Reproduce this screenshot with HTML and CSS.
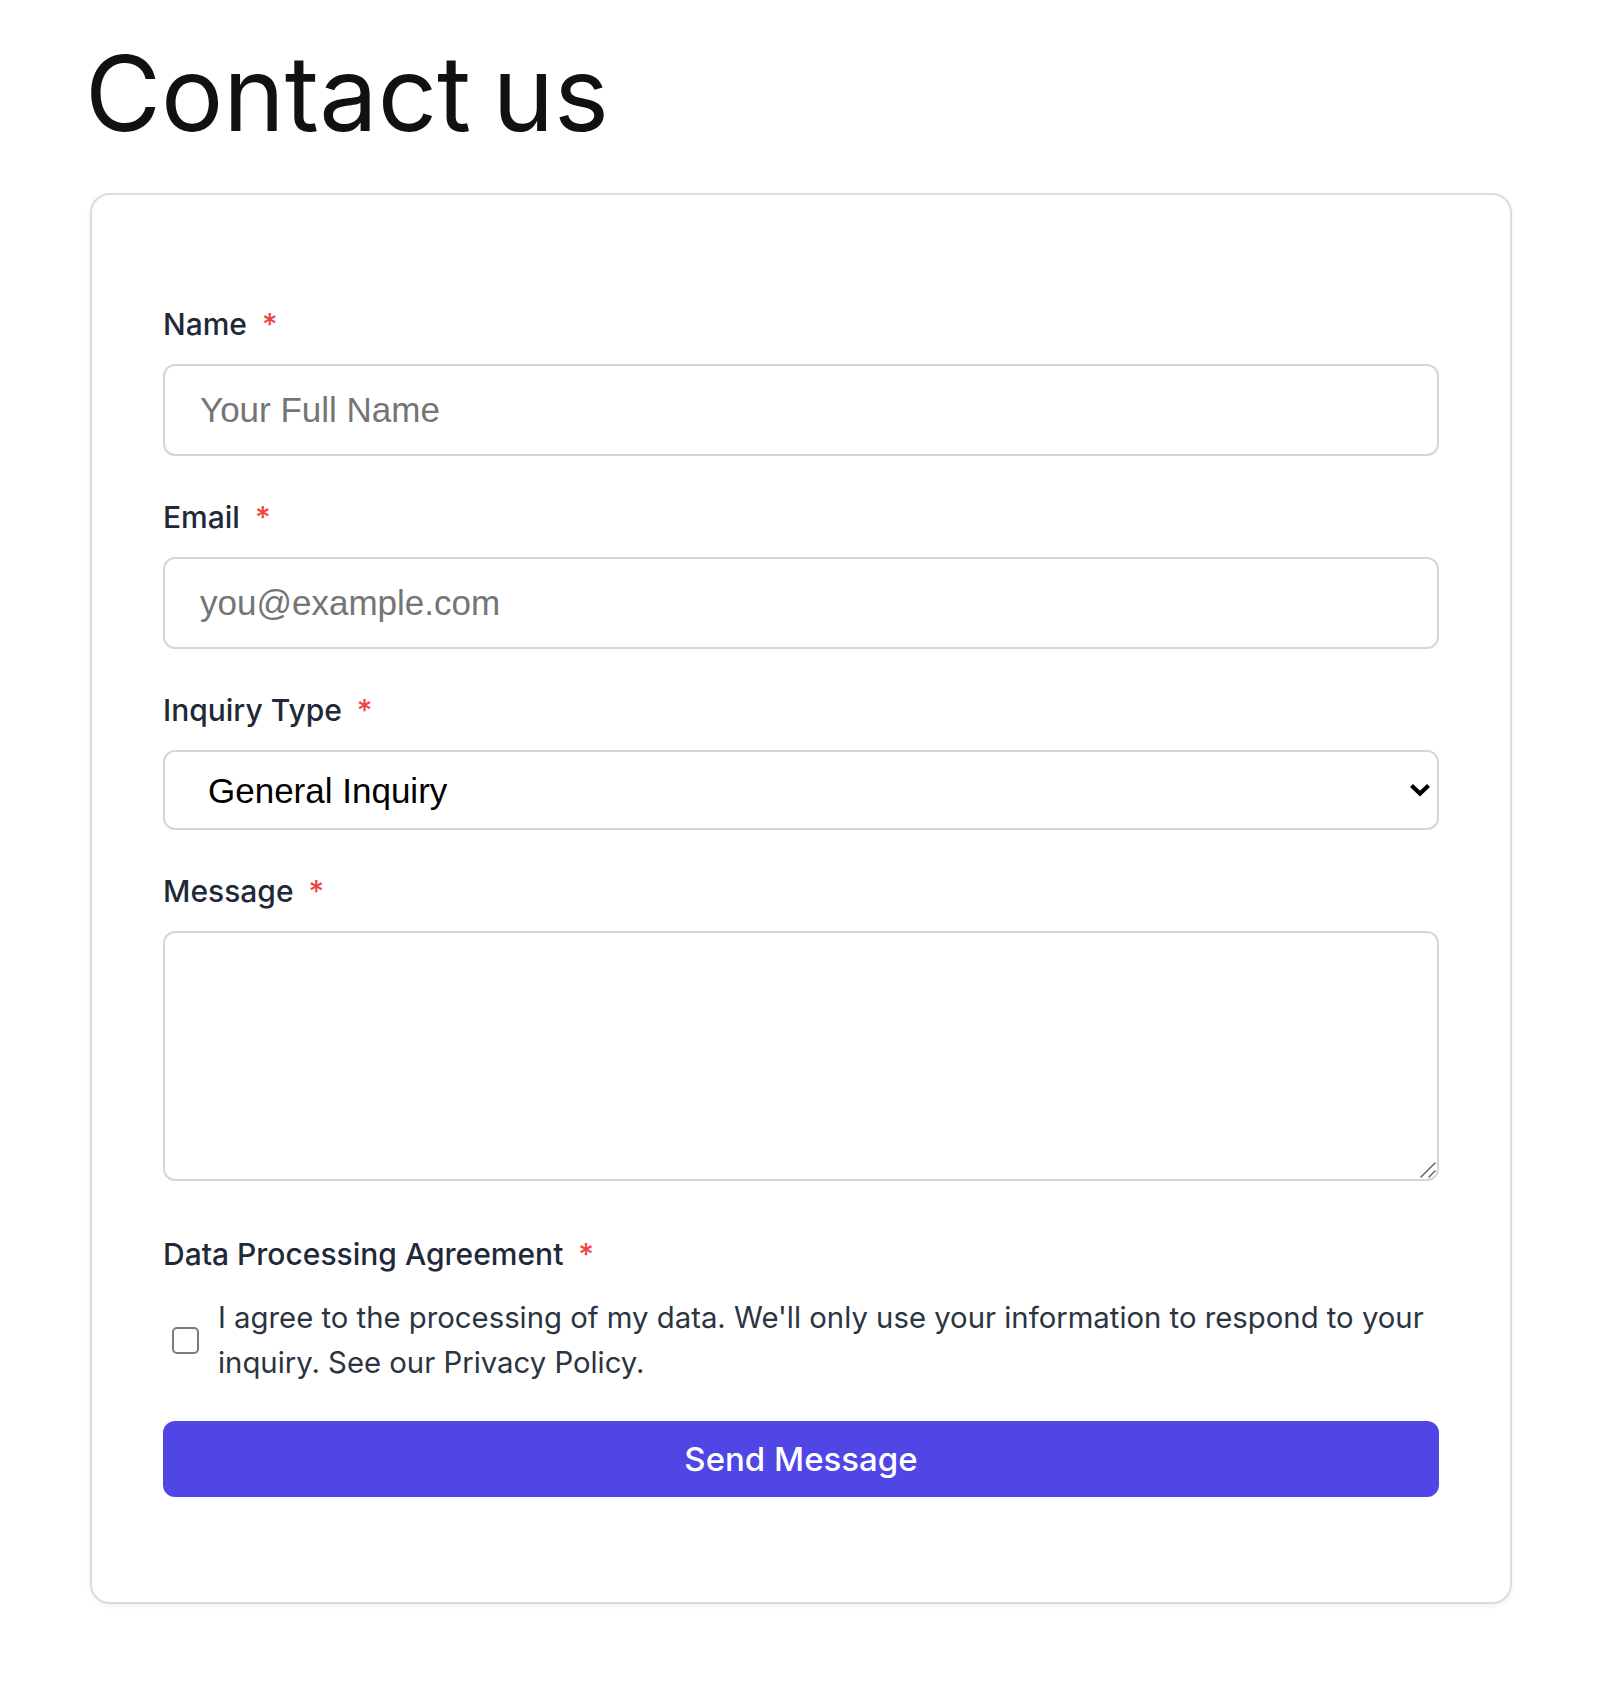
FILE: index.html
```html
<!DOCTYPE html>
<html lang="en">
<head>
<meta charset="utf-8">
<title>Contact us</title>
<link rel="stylesheet" href="styles.css">
</head>
<body>
<main class="page">
  <h1 class="title">Contact us</h1>
  <form class="card">
    <div class="field">
      <label class="label" for="name">Name<span class="req">*</span></label>
      <input class="control" id="name" type="text" placeholder="Your Full Name">
    </div>
    <div class="field">
      <label class="label" for="email">Email<span class="req">*</span></label>
      <input class="control" id="email" type="email" placeholder="you@example.com">
    </div>
    <div class="field">
      <label class="label" for="type">Inquiry Type<span class="req">*</span></label>
      <div class="select-wrap">
        <select class="select" id="type">
          <option>General Inquiry</option>
          <option>Support</option>
          <option>Sales</option>
        </select>
        <svg class="chevron" viewBox="0 0 22 14" width="22" height="14" aria-hidden="true">
          <polyline points="2.5,2.5 11,10.5 19.5,2.5" fill="none" stroke="#000" stroke-width="4.2" stroke-linejoin="miter"/>
        </svg>
      </div>
    </div>
    <div class="field">
      <label class="label" for="msg">Message<span class="req">*</span></label>
      <div class="textarea-wrap">
        <textarea class="textarea" id="msg"></textarea>
        <svg class="grip" viewBox="0 0 18 18" width="18" height="18" aria-hidden="true">
          <line x1="2" y1="16" x2="16" y2="2" stroke="#6b6b6b" stroke-width="1.6" stroke-linecap="round"/>
          <line x1="10" y1="16" x2="16" y2="10" stroke="#6b6b6b" stroke-width="1.6" stroke-linecap="round"/>
        </svg>
      </div>
    </div>
    <div class="field field-consent">
      <span class="label">Data Processing Agreement<span class="req">*</span></span>
      <label class="consent">
        <input class="check" type="checkbox">
        <span class="consent-text">I agree to the processing of my data. We'll only use your information to respond to your inquiry. See our Privacy Policy.</span>
      </label>
    </div>
    <button class="submit" type="button">Send Message</button>
  </form>
</main>
</body>
</html>
```

FILE: styles.css
```css
* { box-sizing: border-box; }

html, body {
  margin: 0;
  padding: 0;
  background: #ffffff;
}

body {
  font-family: Inter, "Noto Sans", sans-serif;
  color: #1f2937;
}

.page {
  padding: 31px 88px 89px 90px;
}

.title {
  margin: 0 0 37px -5px;
  font-family: Inter, "Noto Sans", sans-serif;
  font-weight: 400;
  font-size: 104px;
  line-height: 125px;
  letter-spacing: 0;
  word-spacing: -8px;
  color: #111111;
}

.card {
  display: flex;
  flex-direction: column;
  border: 2px solid #dcdcdf;
  border-radius: 20px;
  padding: 111px 71px 105px;
  background: #fff;
  box-shadow: 0 2px 5px rgba(0, 0, 0, 0.06);
}

.field {
  display: flex;
  flex-direction: column;
  margin-bottom: 43px;
}

.field-consent {
  margin-top: 12px;
  margin-bottom: 36px;
}

.label {
  display: block;
  font-family: Inter, "Noto Sans", sans-serif;
  font-size: 30px;
  font-weight: 500;
  line-height: 36px;
  color: #1f2937;
  margin-bottom: 22px;
}

.req {
  color: #ef4444;
  margin-left: 15px;
  font-weight: 500;
}

.control {
  display: block;
  width: 100%;
  height: 92px;
  border: 2px solid #d4d6da;
  border-radius: 12px;
  padding: 0 35px;
  font-family: "Liberation Sans", Arial, sans-serif;
  font-size: 35px;
  color: #111;
  background: #fff;
  outline: none;
}

.control::placeholder {
  color: #757575;
}

.select-wrap,
.textarea-wrap {
  position: relative;
}

.select {
  display: block;
  width: 100%;
  height: 80px;
  border: 2px solid #d4d6da;
  border-radius: 12px;
  padding: 0 60px 0 43px;
  font-family: "Liberation Sans", Arial, sans-serif;
  font-size: 35px;
  color: #000;
  background: #fff;
  appearance: none;
  -webkit-appearance: none;
  outline: none;
}

.chevron {
  position: absolute;
  right: 8px;
  top: 33px;
  pointer-events: none;
}

.textarea {
  display: block;
  width: 100%;
  height: 250px;
  border: 2px solid #d4d6da;
  border-radius: 12px;
  padding: 20px 35px;
  font-family: "Liberation Sans", Arial, sans-serif;
  font-size: 35px;
  background: #fff;
  resize: none;
  outline: none;
}

.grip {
  position: absolute;
  right: 2px;
  bottom: 2px;
  pointer-events: none;
}

.consent {
  display: flex;
  align-items: center;
  gap: 19px;
  padding-left: 9px;
  margin-top: 1px;
}

.check {
  flex: none;
  appearance: none;
  -webkit-appearance: none;
  width: 27px;
  height: 27px;
  margin: 0;
  border: 2px solid #7a7a7a;
  border-radius: 5px;
  background: #fff;
}

.consent-text {
  font-family: Inter, "Noto Sans", sans-serif;
  font-size: 29.3px;
  line-height: 45px;
  font-weight: 400;
  color: #2b3441;
}

.submit {
  display: block;
  width: 100%;
  height: 76px;
  border: none;
  border-radius: 12px;
  background: #4f46e5;
  color: #ffffff;
  font-family: Inter, "Noto Sans", sans-serif;
  font-size: 33px;
  font-weight: 500;
  cursor: pointer;
}
```
